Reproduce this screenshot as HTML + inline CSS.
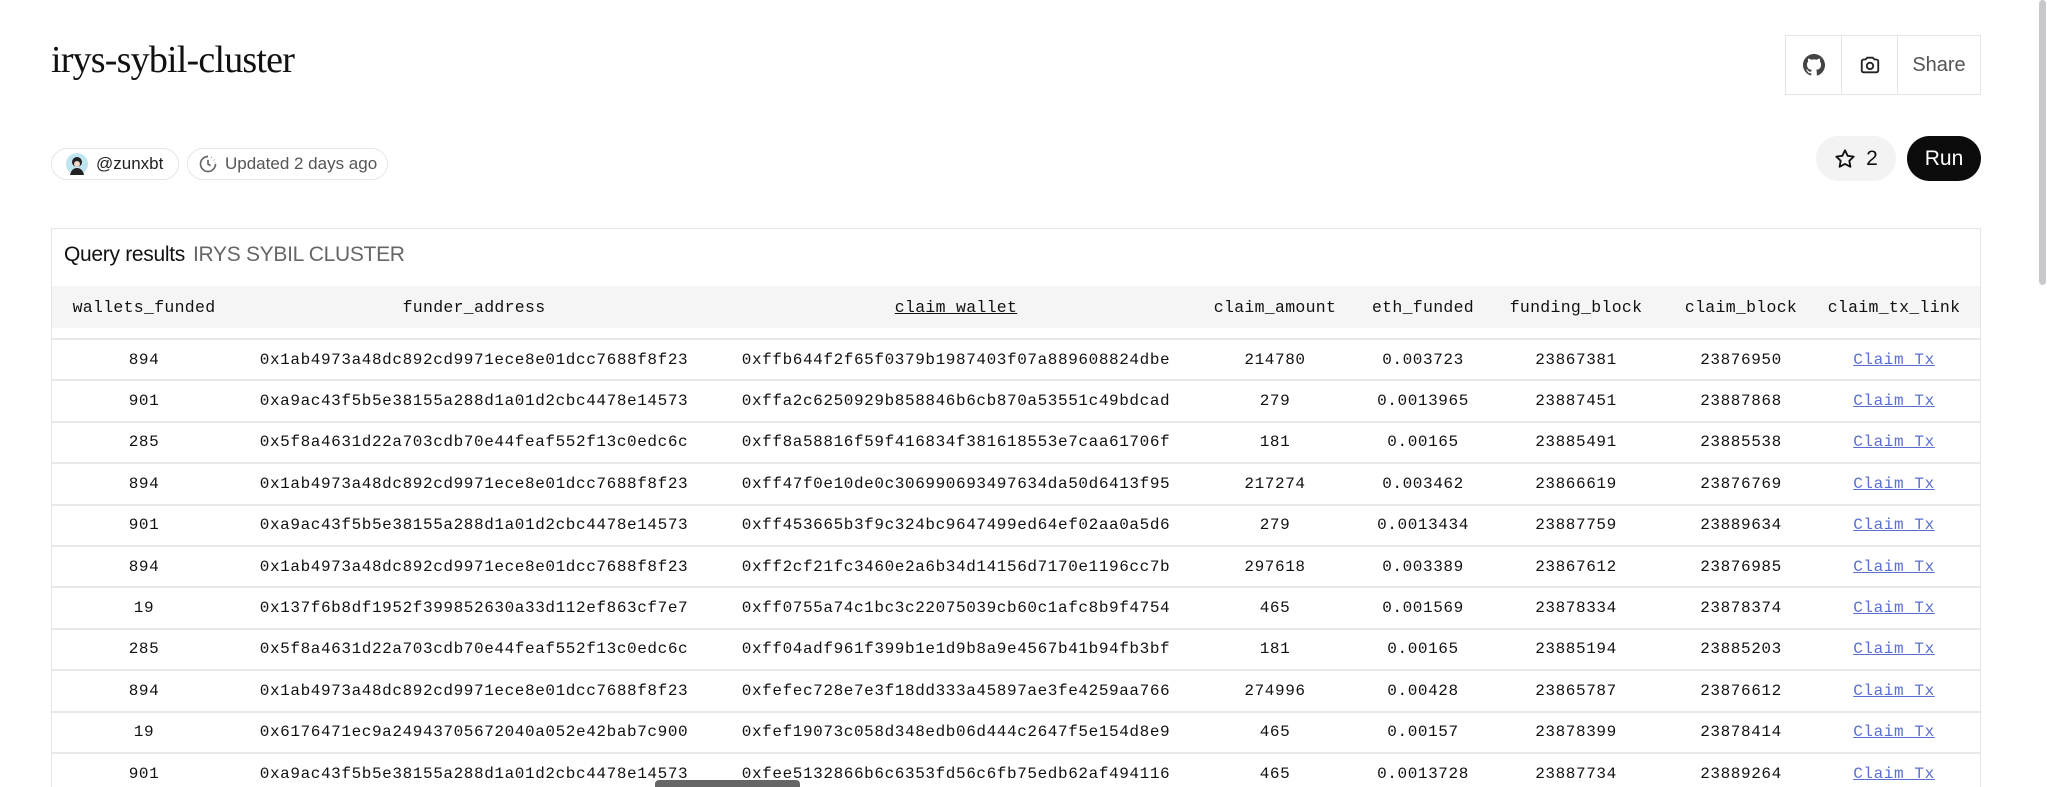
<!DOCTYPE html>
<html style="width:2047px;height:787px;overflow:hidden"><head><meta charset="utf-8"><style>
*{margin:0;padding:0;box-sizing:border-box}
body{width:2047px;height:787px;overflow:hidden;background:#fff;font-family:"Liberation Sans",sans-serif;color:#111;position:relative}
.title{position:absolute;left:51px;top:38px;font-family:"Liberation Serif",serif;font-size:38px;letter-spacing:-0.8px;color:#111}
.btns{position:absolute;left:1785px;top:35px;width:196px;height:60px;border:1px solid #e4e4e4;display:flex}
.btns div{border-right:1px solid #e4e4e4;display:flex;align-items:center;justify-content:center;height:100%}
.btns div:last-child{border-right:none}
.pill{position:absolute;top:148px;height:32px;border:1px solid #e6e6e6;border-radius:16px;display:flex;align-items:center;font-size:17px;color:#222}
.star{position:absolute;left:1816px;top:136px;width:80px;height:45px;border-radius:23px;background:#f3f3f3;display:flex;align-items:center;justify-content:center;gap:10px;font-size:21px}
.run{position:absolute;left:1907px;top:136px;width:74px;height:45px;border-radius:23px;background:#0c0c0c;color:#fff;display:flex;align-items:center;justify-content:center;font-size:21px}
.box{position:absolute;left:51px;top:228px;width:1930px;height:559px;border:1px solid #e4e4e4;border-bottom:none;overflow:hidden}
.qr{position:absolute;left:12px;top:14px;font-size:21px;color:#111;letter-spacing:-0.3px}
.qr span{color:#666;margin-left:8px}
.hdr{position:absolute;left:0;top:57px;width:1928px;height:42px;background:#f5f5f5}
.row{position:absolute;left:0;width:1928px;height:41.4px;border-top:2px solid #e8e8e8}
.c{position:absolute;top:0;height:100%;display:flex;align-items:center;justify-content:center;font-family:"Liberation Mono",monospace;font-size:16px;letter-spacing:0.6px;color:#111;white-space:nowrap;transform:translateX(-50%)}
.hdr .c{font-size:16.5px;letter-spacing:0.3px}
a{color:#5a6fd0;text-decoration:underline}
.sb{position:absolute;left:2039px;top:0;width:7px;height:285px;background:#c8c8cc;border-radius:4px}
.hs{position:absolute;left:655px;top:780px;width:145px;height:7px;background:#666;border-radius:4px 4px 0 0}
</style></head><body>
<div class="title">irys-sybil-cluster</div>
<div class="btns">
<div style="width:56px"><svg width="22" height="22" viewBox="0 0 16 16"><path fill="#444" d="M8 0C3.58 0 0 3.58 0 8c0 3.54 2.290 6.530 5.470 7.590.4.07.55-.17.55-.38v-1.330c-2.230.48-2.700-1.070-2.700-1.070-.36-.92-.89-1.170-.89-1.170-.73-.5.06-.49.06-.49.8.06 1.230.83 1.230.83.72 1.220 1.870.87 2.330.66.07-.52.28-.87.5-1.070-1.780-.2-3.640-.89-3.640-3.950 0-.87.31-1.590.83-2.150-.08-.2-.36-1.020.08-2.120 0 0 .67-.21 2.200.82a7.600 7.600 0 0 1 4 0c1.530-1.040 2.200-.82 2.200-.82.44 1.100.16 1.920.08 2.120.51.56.82 1.270.82 2.150 0 3.070-1.870 3.750-3.650 3.950.29.25.54.73.54 1.480v2.200c0 .21.15.46.55.38A8 8 0 0 0 16 8c0-4.420-3.580-8-8-8z"/></svg></div>
<div style="width:56px"><svg width="22" height="22" viewBox="0 0 24 24" fill="none" stroke="#222" stroke-width="2"><path d="M3 8a2 2 0 0 1 2-2h2l2-2h6l2 2h2a2 2 0 0 1 2 2v10a2 2 0 0 1-2 2H5a2 2 0 0 1-2-2z"/><circle cx="12" cy="13" r="3.5"/></svg></div>
<div style="flex:1;font-size:20px;color:#555">Share</div>
</div>
<div class="pill" style="left:51px;width:128px;padding-left:14px"><svg width="22" height="22" viewBox="0 0 22 22" style="margin-right:8px"><circle cx="11" cy="11" r="11" fill="#bfe6f0"/><circle cx="11" cy="9" r="5" fill="#222"/><path d="M4 22c1-5 4-7 7-7s6 2 7 7z" fill="#222"/><circle cx="11" cy="11" r="3" fill="#f2d6c4"/></svg>@zunxbt</div>
<div class="pill" style="left:187px;width:201px;padding-left:10px;color:#555"><svg width="20" height="20" viewBox="0 0 24 24" fill="none" stroke="#666" stroke-width="2" style="margin-right:7px"><path d="M12 3a9 9 0 1 0 9 9"/><path d="M12 7v5l3 2"/><path d="M16 4l.5.3M19 7l.3.5M20.7 10.5v.5" /></svg>Updated 2 days ago</div>
<div class="star"><svg width="22" height="22" viewBox="0 0 24 24" fill="none" stroke="#111" stroke-width="2" stroke-linejoin="round"><path d="M12 2.5l2.9 6 6.6.9-4.8 4.6 1.2 6.5L12 17.4l-5.9 3.1 1.2-6.5-4.8-4.6 6.6-.9z"/></svg>2</div>
<div class="run">Run</div>
<div class="box">
<div class="qr">Query results<span>IRYS SYBIL CLUSTER</span></div>
<div class="hdr">
<div class="c" style="left:92px">wallets_funded</div>
<div class="c" style="left:422px">funder_address</div>
<div class="c" style="left:904px;text-decoration:underline">claim_wallet</div>
<div class="c" style="left:1223px">claim_amount</div>
<div class="c" style="left:1371px">eth_funded</div>
<div class="c" style="left:1524px">funding_block</div>
<div class="c" style="left:1689px">claim_block</div>
<div class="c" style="left:1842px">claim_tx_link</div>
</div>
<div id="rows"></div>
</div>
<div class="sb"></div>
<div class="hs"></div>
<script>
var d=[
["894","0x1ab4973a48dc892cd9971ece8e01dcc7688f8f23","0xffb644f2f65f0379b1987403f07a889608824dbe","214780","0.003723","23867381","23876950"],
["901","0xa9ac43f5b5e38155a288d1a01d2cbc4478e14573","0xffa2c6250929b858846b6cb870a53551c49bdcad","279","0.0013965","23887451","23887868"],
["285","0x5f8a4631d22a703cdb70e44feaf552f13c0edc6c","0xff8a58816f59f416834f381618553e7caa61706f","181","0.00165","23885491","23885538"],
["894","0x1ab4973a48dc892cd9971ece8e01dcc7688f8f23","0xff47f0e10de0c306990693497634da50d6413f95","217274","0.003462","23866619","23876769"],
["901","0xa9ac43f5b5e38155a288d1a01d2cbc4478e14573","0xff453665b3f9c324bc9647499ed64ef02aa0a5d6","279","0.0013434","23887759","23889634"],
["894","0x1ab4973a48dc892cd9971ece8e01dcc7688f8f23","0xff2cf21fc3460e2a6b34d14156d7170e1196cc7b","297618","0.003389","23867612","23876985"],
["19","0x137f6b8df1952f399852630a33d112ef863cf7e7","0xff0755a74c1bc3c22075039cb60c1afc8b9f4754","465","0.001569","23878334","23878374"],
["285","0x5f8a4631d22a703cdb70e44feaf552f13c0edc6c","0xff04adf961f399b1e1d9b8a9e4567b41b94fb3bf","181","0.00165","23885194","23885203"],
["894","0x1ab4973a48dc892cd9971ece8e01dcc7688f8f23","0xfefec728e7e3f18dd333a45897ae3fe4259aa766","274996","0.00428","23865787","23876612"],
["19","0x6176471ec9a24943705672040a052e42bab7c900","0xfef19073c058d348edb06d444c2647f5e154d8e9","465","0.00157","23878399","23878414"],
["901","0xa9ac43f5b5e38155a288d1a01d2cbc4478e14573","0xfee5132866b6c6353fd56c6fb75edb62af494116","465","0.0013728","23887734","23889264"]];
var xs=[92,422,904,1223,1371,1524,1689],h="";
d.forEach(function(r,i){h+='<div class="row" style="top:'+(109+i*41.4)+'px">';
r.forEach(function(v,j){h+='<div class="c" style="left:'+xs[j]+'px">'+v+'</div>'});
h+='<div class="c" style="left:1842px"><a>Claim Tx</a></div></div>'});
document.getElementById("rows").innerHTML=h;
</script>
</body></html>
